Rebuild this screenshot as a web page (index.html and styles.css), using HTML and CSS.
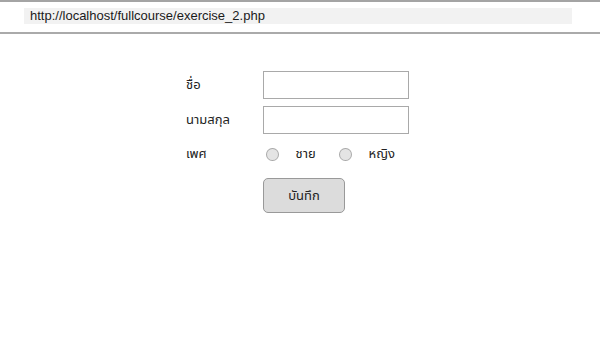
FILE: index.html
```html
<!DOCTYPE html>
<html lang="th">
<head>
  <meta charset="UTF-8">
  <meta name="viewport" content="width=device-width, initial-scale=1.0">
  <title>exercise_2</title>
  <link rel="stylesheet" href="styles.css">
</head>
<body>
  <div class="browser-bar">
    <div class="address">http://localhost/fullcourse/exercise_2.php</div>
  </div>
  <form class="form">
    <label class="label" for="fname">ชื่อ</label>
    <input type="text" id="fname" class="text-input">

    <label class="label" for="lname">นามสกุล</label>
    <input type="text" id="lname" class="text-input">

    <div class="label">เพศ</div>
    <div class="gender">
      <span class="radio"></span><span class="option">ชาย</span>
      <span class="radio"></span><span class="option">หญิง</span>
    </div>

    <div></div>
    <button type="button" class="save">บันทึก</button>
  </form>
</body>
</html>
```

FILE: styles.css
```css
body {
  margin: 0;
  background: #fff;
  font-family: "Liberation Sans", Arial, sans-serif;
  color: #222;
}

.browser-bar {
  border-top: 2px solid #a4a4a4;
  border-bottom: 2px solid #aaa;
  padding: 6px 28px 8px 24px;
}

.address {
  height: 16px;
  line-height: 16px;
  background: #f2f2f2;
  font-size: 13px;
  padding-left: 6px;
  color: #1a1a1a;
}

.form {
  display: grid;
  grid-template-columns: 77px 146px;
  grid-template-rows: 28px 28px 26px 46px;
  row-gap: 7px;
  margin: 37px 0 0 186px;
  align-items: center;
  font-family: "Noto Sans Thai", "Noto Sans Thai UI", "Kanit", "Prompt", "Loma", "Garuda", "Liberation Sans", sans-serif;
}

.label {
  font-size: 13px;
  color: #222;
}

.text-input {
  box-sizing: border-box;
  width: 146px;
  height: 28px;
  border: 1px solid #a9a9a9;
  margin: 0;
  background: #fff;
}

.gender {
  display: flex;
  align-items: center;
  font-size: 13px;
}

.radio {
  box-sizing: border-box;
  width: 13px;
  height: 13px;
  border-radius: 50%;
  border: 1px solid #aaa;
  background: #e4e4e4;
  margin-left: 3px;
}

.option {
  margin-left: 17px;
  width: 42px;
}

.save {
  grid-column: 2;
  justify-self: start;
  align-self: start;
  margin-top: 4px;
  width: 82px;
  height: 35px;
  border: 1px solid #999;
  border-radius: 5px;
  background: #dcdcdc;
  font-size: 13px;
  color: #222;
  font-family: inherit;
}
```
